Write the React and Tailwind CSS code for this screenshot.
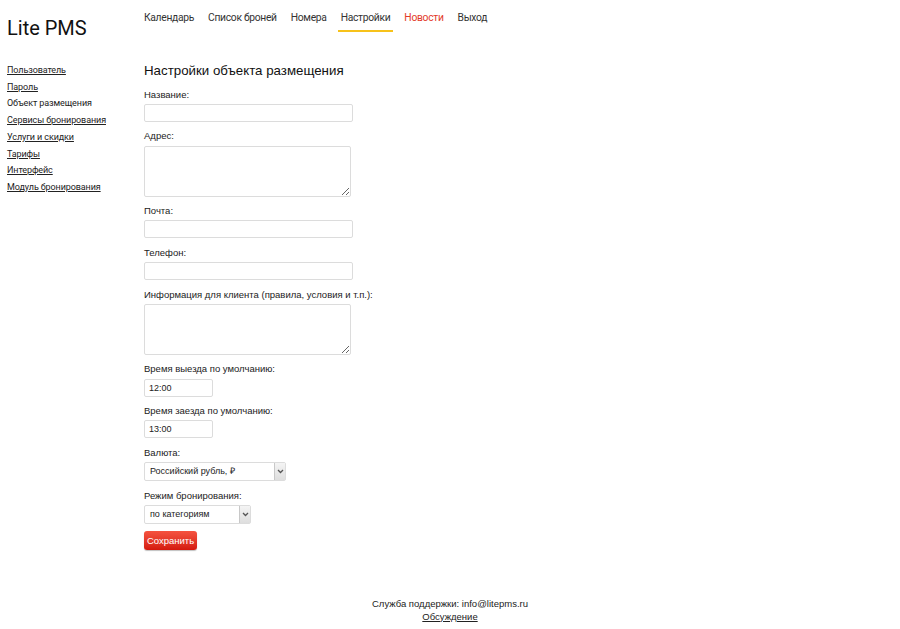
import React from 'react';

const navItems = [
    {name: 'Календарь'},
    {name: 'Список броней'},
    {name: 'Номера'},
    {name: 'Настройки', active: true},
    {name: 'Новости', red: true},
    {name: 'Выход'},
];

const sideItems = [
    {name: 'Пользователь', link: true},
    {name: 'Пароль', link: true},
    {name: 'Объект размещения', link: false},
    {name: 'Сервисы бронирования', link: true},
    {name: 'Услуги и скидки', link: true},
    {name: 'Тарифы', link: true},
    {name: 'Интерфейс', link: true},
    {name: 'Модуль бронирования', link: true},
];

const Label = ({children}) => (
    <div className="text-[9.5px] leading-[13px] mt-[7.5px] mb-[3.25px] text-[#222]">{children}</div>
);

const Input = ({value, width}) => (
    <input
        type="text"
        defaultValue={value}
        className={`${width} h-[18px] block border border-[#dcdcdc] rounded-[2px] px-[4px] text-[9px] text-[#222] outline-none`}
    />
);

const TextArea = () => (
    <textarea className="block w-[207px] h-[51px] border border-[#dcdcdc] rounded-[2px] outline-none text-[9px] leading-[12px]"></textarea>
);

const Select = ({value, width}) => (
    <div className={`${width} h-[19px] flex border border-[#dcdcdc] rounded-[2px] bg-white`}>
        <div className="flex-1 pl-[5px] text-[9px] leading-[17px] text-[#222]">{value}</div>
        <div className="w-[11px] h-[17px] border-l border-[#c8c8c8] bg-gradient-to-b from-[#f4f4f4] to-[#dedede] flex items-center justify-center">
            <svg width="7" height="5" viewBox="0 0 7 5">
                <path d="M1 1 L3.5 3.5 L6 1" fill="none" stroke="#555" strokeWidth="1.3"/>
            </svg>
        </div>
    </div>
);

const App = () => {
    return (
        <div className="min-h-[629px] bg-white flex flex-col" style={{fontFamily: 'Arial, "Liberation Sans", sans-serif'}}>
            <div className="flex h-[62px]">
                <div className="w-[144px] pl-[7px] pt-[16px]">
                    <div className="text-[20px] leading-[24px] text-[#111]" style={{fontFamily: 'Roboto, sans-serif'}}>Lite PMS</div>
                </div>
                <div className="flex gap-[14px] pt-[11px] items-start" style={{fontFamily: 'Roboto, sans-serif'}}>
                    {navItems.map(item => (
                        <div
                            key={item.name}
                            className={`text-[10.3px] tracking-[-0.3px] leading-[14px] pb-[5px] border-b-2 -mx-[3px] px-[3px] ${item.active ? 'border-[#f7c21a]' : 'border-transparent'} ${item.red ? 'text-[#e33a2a]' : 'text-[#333]'}`}
                        >
                            {item.name}
                        </div>
                    ))}
                </div>
            </div>
            <div className="flex">
                <div className="w-[144px] pl-[7px]" style={{fontFamily: 'Roboto, sans-serif'}}>
                    {sideItems.map(item => (
                        <div key={item.name} className={`text-[9px] tracking-[-0.1px] leading-[16.7px] text-[#222] ${item.link ? 'underline' : ''}`}>
                            {item.name}
                        </div>
                    ))}
                </div>
                <div className="flex flex-col">
                    <div className="text-[13.3px] leading-[18px] text-[#111]">Настройки объекта размещения</div>
                    <Label>Название:</Label>
                    <Input width="w-[209px]"/>
                    <Label>Адрес:</Label>
                    <TextArea/>
                    <Label>Почта:</Label>
                    <Input width="w-[209px]"/>
                    <Label>Телефон:</Label>
                    <Input width="w-[209px]"/>
                    <Label>Информация для клиента (правила, условия и т.п.):</Label>
                    <TextArea/>
                    <Label>Время выезда по умолчанию:</Label>
                    <Input value="12:00" width="w-[69px]"/>
                    <Label>Время заезда по умолчанию:</Label>
                    <Input value="13:00" width="w-[69px]"/>
                    <Label>Валюта:</Label>
                    <Select value="Российский рубль, ₽" width="w-[142px]"/>
                    <Label>Режим бронирования:</Label>
                    <Select value="по категориям" width="w-[107px]"/>
                    <button className="block mt-[7px] w-[53px] h-[19px] rounded-[3px] bg-gradient-to-b from-[#f5523f] to-[#d4170c] text-white text-[9.5px] leading-[19px] shadow-[0_1px_1px_rgba(0,0,0,0.25)]">
                        Сохранить
                    </button>
                </div>
            </div>
            <div className="mt-[47px] text-center text-[9.5px] leading-[13px] text-[#222]">
                <div>Служба поддержки: info@litepms.ru</div>
                <div className="underline">Обсуждение</div>
            </div>
        </div>
    );
};

export default App;
